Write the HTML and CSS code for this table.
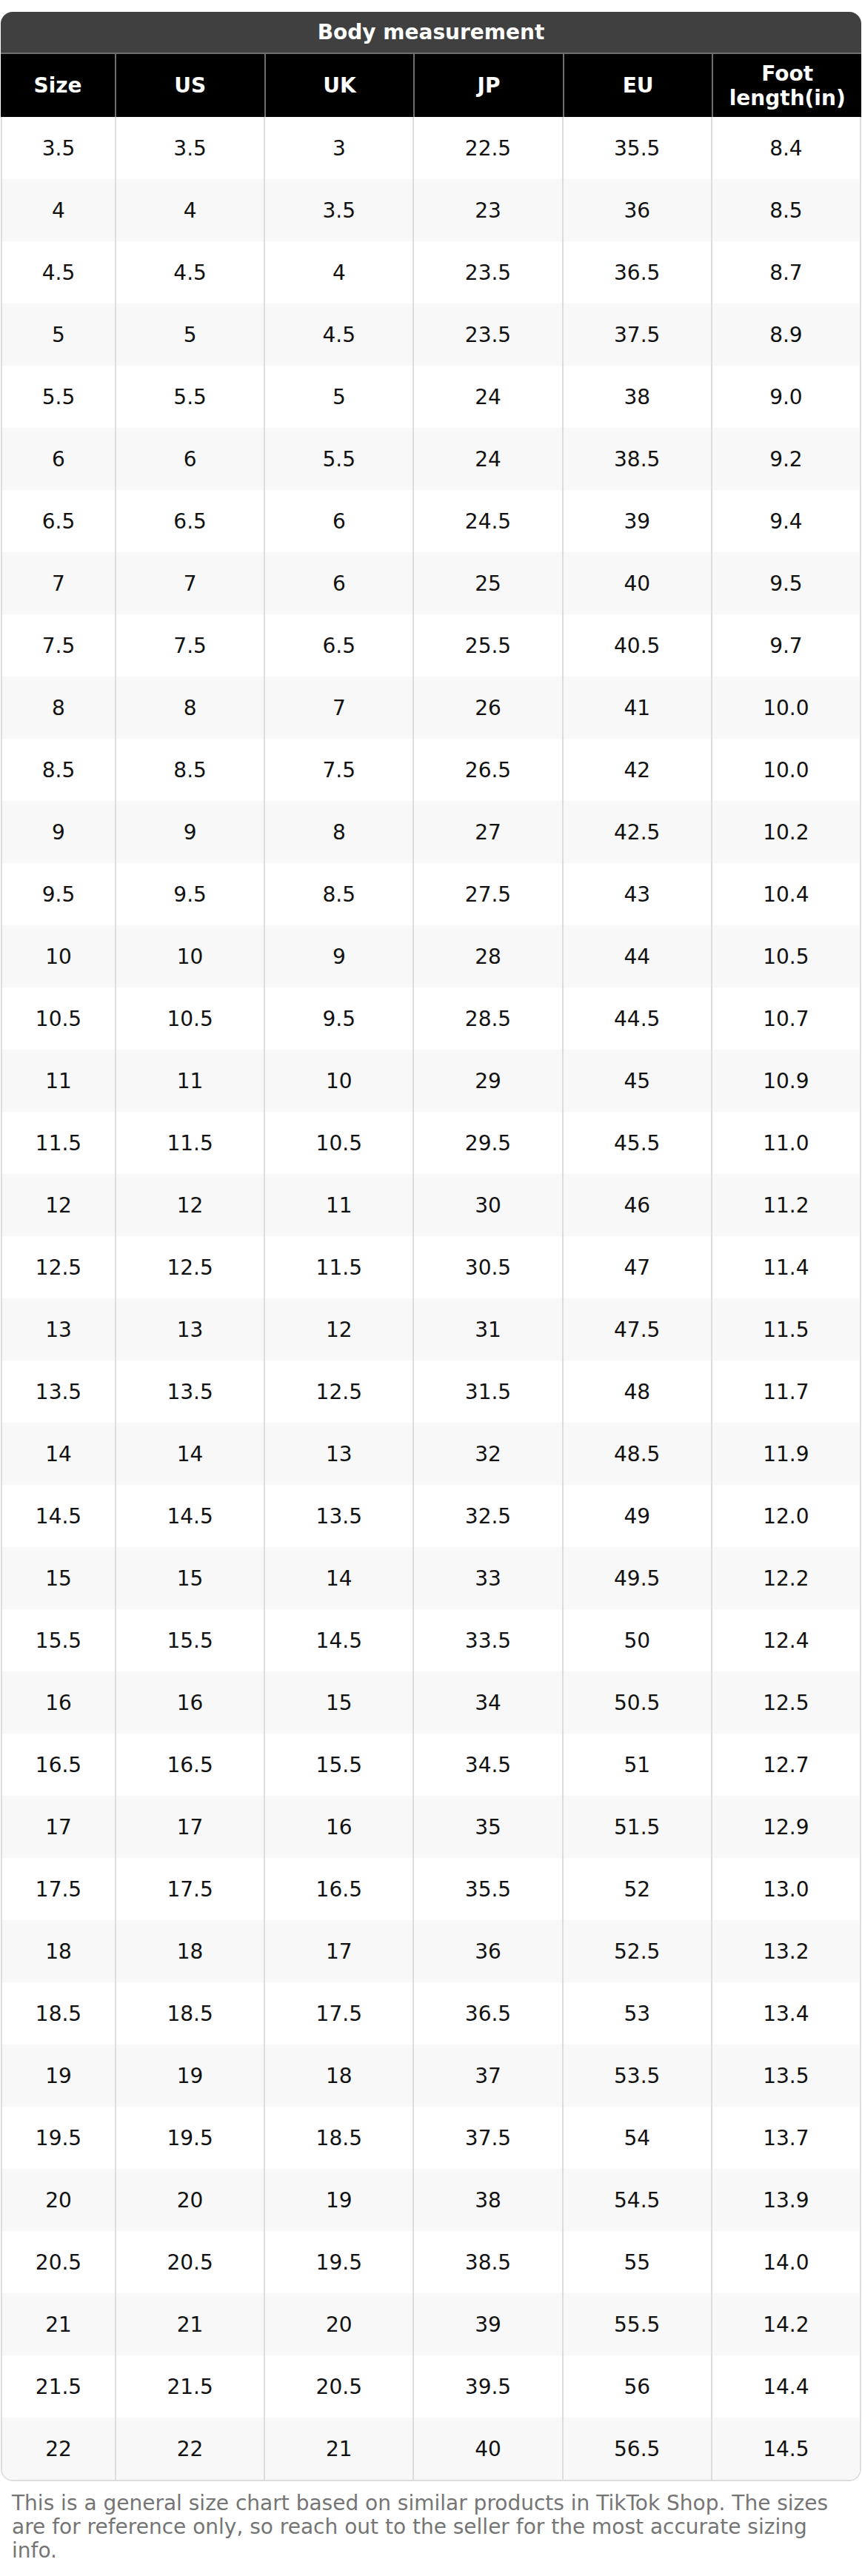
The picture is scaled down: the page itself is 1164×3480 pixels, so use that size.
FILE: index.html
```html
<!DOCTYPE html>
<html lang="en">
<head>
<meta charset="utf-8">
<title>Size chart</title>
<link rel="stylesheet" href="styles.css">
</head>
<body>
<div class="chart">
  <div class="title">Body measurement</div>
  <div class="row head">
    <div class="cell">Size</div>
    <div class="cell">US</div>
    <div class="cell">UK</div>
    <div class="cell">JP</div>
    <div class="cell">EU</div>
    <div class="cell">Foot<br>length(in)</div>
  </div>
  <div class="body" id="body"></div>
</div>
<p class="note">This is a general size chart based on similar products in TikTok Shop. The sizes are for reference only, so reach out to the seller for the most accurate sizing info.</p>
<script src="script.js"></script>
</body>
</html>
```
FILE: script.js
```js
const data = [
["3.5","3.5","3","22.5","35.5","8.4"],
["4","4","3.5","23","36","8.5"],
["4.5","4.5","4","23.5","36.5","8.7"],
["5","5","4.5","23.5","37.5","8.9"],
["5.5","5.5","5","24","38","9.0"],
["6","6","5.5","24","38.5","9.2"],
["6.5","6.5","6","24.5","39","9.4"],
["7","7","6","25","40","9.5"],
["7.5","7.5","6.5","25.5","40.5","9.7"],
["8","8","7","26","41","10.0"],
["8.5","8.5","7.5","26.5","42","10.0"],
["9","9","8","27","42.5","10.2"],
["9.5","9.5","8.5","27.5","43","10.4"],
["10","10","9","28","44","10.5"],
["10.5","10.5","9.5","28.5","44.5","10.7"],
["11","11","10","29","45","10.9"],
["11.5","11.5","10.5","29.5","45.5","11.0"],
["12","12","11","30","46","11.2"],
["12.5","12.5","11.5","30.5","47","11.4"],
["13","13","12","31","47.5","11.5"],
["13.5","13.5","12.5","31.5","48","11.7"],
["14","14","13","32","48.5","11.9"],
["14.5","14.5","13.5","32.5","49","12.0"],
["15","15","14","33","49.5","12.2"],
["15.5","15.5","14.5","33.5","50","12.4"],
["16","16","15","34","50.5","12.5"],
["16.5","16.5","15.5","34.5","51","12.7"],
["17","17","16","35","51.5","12.9"],
["17.5","17.5","16.5","35.5","52","13.0"],
["18","18","17","36","52.5","13.2"],
["18.5","18.5","17.5","36.5","53","13.4"],
["19","19","18","37","53.5","13.5"],
["19.5","19.5","18.5","37.5","54","13.7"],
["20","20","19","38","54.5","13.9"],
["20.5","20.5","19.5","38.5","55","14.0"],
["21","21","20","39","55.5","14.2"],
["21.5","21.5","20.5","39.5","56","14.4"],
["22","22","21","40","56.5","14.5"]
];
const body = document.getElementById("body");
data.forEach(r => {
  const row = document.createElement("div");
  row.className = "row";
  r.forEach(v => {
    const c = document.createElement("div");
    c.className = "cell";
    c.textContent = v;
    row.appendChild(c);
  });
  body.appendChild(row);
});
```
FILE: styles.css
```css
html, body {
  margin: 0;
  padding: 0;
  background: #ffffff;
}
body {
  font-family: "DejaVu Sans", Verdana, sans-serif;
  width: 1164px;
}
.chart {
  margin: 16px 1px 0 1px;
  border-radius: 16px;
  overflow: hidden;
}
.title {
  height: 55px;
  background: #404040;
  color: #ffffff;
  font-weight: bold;
  font-size: 28px;
  display: flex;
  align-items: center;
  justify-content: center;
  border-bottom: 2px solid #6e6e6e;
}
.row {
  display: grid;
  grid-template-columns: 152px repeat(5, 1fr);
  height: 84px;
}
.cell {
  display: flex;
  align-items: center;
  justify-content: center;
  text-align: center;
  font-size: 28px;
  color: #111111;
  border-left: 2px solid #dddddd;
}
.cell:first-child {
  border-left: none;
}
.head {
  grid-template-columns: 154px repeat(5, 1fr);
  height: 85px;
  background: #000000;
}
.head .cell {
  color: #ffffff;
  font-weight: bold;
  line-height: 33px;
  border-left-color: #6e6e6e;
}
.body {
  border: 2px solid #dddddd;
  border-top: none;
  border-radius: 0 0 16px 16px;
  overflow: hidden;
}
.body .row:nth-child(even) {
  background: #f8f8f8;
}
.note {
  margin: 14px 16px 0 16px;
  font-size: 28px;
  line-height: 32px;
  color: #757575;
}
```
